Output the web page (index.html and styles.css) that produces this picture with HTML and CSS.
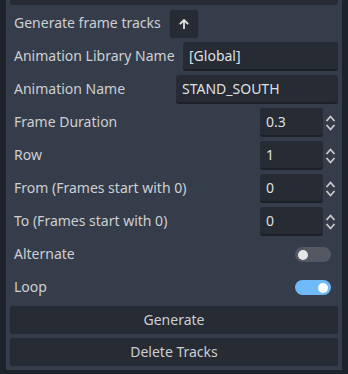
FILE: index.html
```html
<!DOCTYPE html>
<html>
<head>
<meta charset="utf-8">
<link rel="stylesheet" href="styles.css">
</head>
<body>
<div class="panel">
  <div class="strip"></div>
  <div class="row">
    <span class="label">Generate frame tracks</span>
    <button class="icon-btn">
      <svg width="10" height="10" viewBox="0 0 10 10"><path d="M5 1 L1.5 4.5 M5 1 L8.5 4.5 M5 1.5 V9" stroke="#e0e0e0" stroke-width="1.8" fill="none" stroke-linecap="square"/></svg>
    </button>
  </div>
  <div class="row spread">
    <span class="label">Animation Library Name</span>
    <div class="field lib">[Global]</div>
  </div>
  <div class="row spread">
    <span class="label">Animation Name</span>
    <div class="field name">STAND_SOUTH</div>
  </div>
  <div class="row spread">
    <span class="label">Frame Duration</span>
    <div class="spin"><div class="field num">0.3</div><svg class="updown" width="11" height="18" viewBox="0 0 11 18"><path d="M1.5 7 L5.5 2.5 L9.5 7 M1.5 11 L5.5 15.5 L9.5 11" stroke="#c8cacd" stroke-width="1.8" fill="none"/></svg></div>
  </div>
  <div class="row spread">
    <span class="label">Row</span>
    <div class="spin"><div class="field num">1</div><svg class="updown" width="11" height="18" viewBox="0 0 11 18"><path d="M1.5 7 L5.5 2.5 L9.5 7 M1.5 11 L5.5 15.5 L9.5 11" stroke="#c8cacd" stroke-width="1.8" fill="none"/></svg></div>
  </div>
  <div class="row spread">
    <span class="label">From (Frames start with 0)</span>
    <div class="spin"><div class="field num">0</div><svg class="updown" width="11" height="18" viewBox="0 0 11 18"><path d="M1.5 7 L5.5 2.5 L9.5 7 M1.5 11 L5.5 15.5 L9.5 11" stroke="#c8cacd" stroke-width="1.8" fill="none"/></svg></div>
  </div>
  <div class="row spread">
    <span class="label">To (Frames start with 0)</span>
    <div class="spin"><div class="field num">0</div><svg class="updown" width="11" height="18" viewBox="0 0 11 18"><path d="M1.5 7 L5.5 2.5 L9.5 7 M1.5 11 L5.5 15.5 L9.5 11" stroke="#c8cacd" stroke-width="1.8" fill="none"/></svg></div>
  </div>
  <div class="row spread">
    <span class="label">Alternate</span>
    <div class="toggle off"><div class="knob"></div></div>
  </div>
  <div class="row spread">
    <span class="label">Loop</span>
    <div class="toggle on"><div class="knob"></div></div>
  </div>
  <button class="wide">Generate</button>
  <button class="wide">Delete Tracks</button>
</div>
</body>
</html>
```
FILE: styles.css
```css
html, body {
  margin: 0;
  padding: 0;
  background: #1e222a;
  width: 348px;
  height: 374px;
  overflow: hidden;
  font-family: "Noto Sans", "Open Sans", sans-serif;
  font-size: 14px;
  color: #cdcfd2;
}
.panel {
  margin-left: 6px;
  width: 336px;
  height: 370px;
  background: #363d4a;
  box-sizing: border-box;
  padding: 0 4px;
  display: flex;
  flex-direction: column;
  gap: 4px;
}
.strip {
  height: 5px;
  background: #262b34;
  border-radius: 0 0 3px 3px;
}
.row {
  height: 29px;
  display: flex;
  align-items: center;
  padding-left: 4px;
  flex-shrink: 0;
}
.spread {
  justify-content: space-between;
}
.label {
  line-height: 29px;
  white-space: nowrap;
  position: relative;
  top: -1px;
}
.icon-btn {
  margin-left: 9px;
  width: 28px;
  height: 28px;
  background: #262b34;
  border: none;
  border-radius: 3px;
  padding: 0;
  display: flex;
  align-items: center;
  justify-content: center;
}
.field {
  height: 29px;
  box-sizing: border-box;
  background: #262b34;
  border-bottom: 2px solid #1c2027;
  border-radius: 3px;
  padding-left: 6px;
  line-height: 28px;
  color: #dfe0e2;
}
.lib { width: 155px; }
.name { width: 162px; }
.spin {
  display: flex;
  align-items: center;
}
.num { width: 63px; }
.updown {
  margin-left: 2px;
  margin-right: 2px;
}
.toggle {
  width: 36px;
  height: 15px;
  border-radius: 8px;
  margin-right: 7px;
  position: relative;
}
.toggle.off { background: #535862; }
.toggle.on { background: #70bafa; }
.knob {
  position: absolute;
  top: 2.5px;
  width: 10px;
  height: 10px;
  border-radius: 50%;
  background: #e6e6e6;
}
.off .knob { left: 3px; }
.on .knob { right: 3px; background: #ffffff; }
.wide {
  height: 28px;
  flex-shrink: 0;
  background: #262b34;
  border: none;
  border-radius: 3px;
  font-family: "Noto Sans", "Open Sans", sans-serif;
  font-size: 14px;
  color: #cdcfd2;
  padding: 0;
  line-height: 26px;
}
```
